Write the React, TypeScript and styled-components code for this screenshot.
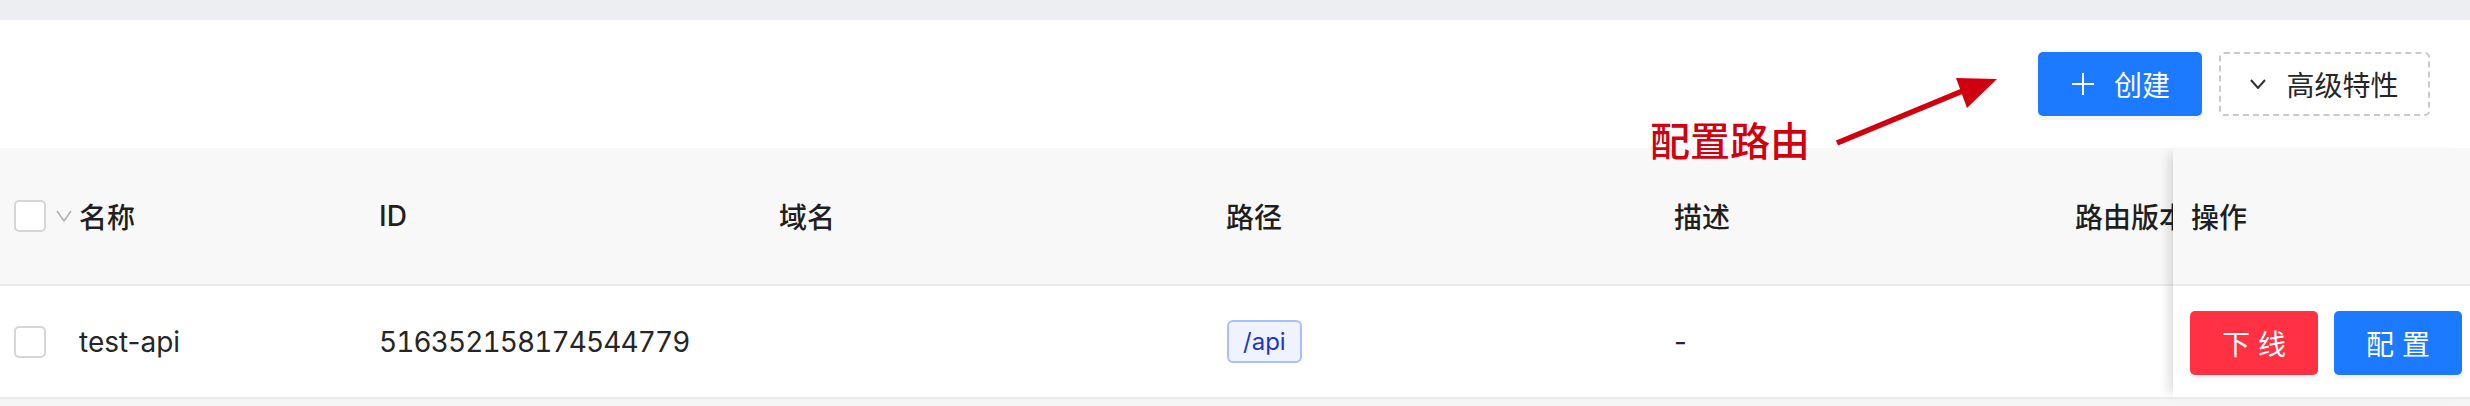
import React from 'react'
import styled, { createGlobalStyle } from 'styled-components'

const GlobalStyle = createGlobalStyle`
  html, body {
    margin: 0;
    padding: 0;
    overflow: hidden;
    background: #f5f5f5;
  }
  * { box-sizing: border-box; }
`

const FONT = `Inter, "Noto Sans CJK SC", "Noto Sans", sans-serif`

const Page = styled.div`
  position: relative;
  width: 2470px;
  height: 406px;
  background: #f5f5f5;
  font-family: ${FONT};
  color: #262626;
  overflow: hidden;
`

const TopBand = styled.div`
  height: 20px;
  background: #edeef2;
`

const Card = styled.div`
  background: #fff;
`

const Toolbar = styled.div`
  height: 128px;
  display: flex;
  justify-content: flex-end;
  align-items: flex-start;
  gap: 17px;
  padding: 32px 40px 0 0;
`

const PrimaryButton = styled.button`
  height: 64px;
  width: 164px;
  display: flex;
  align-items: center;
  justify-content: center;
  gap: 20px;
  padding: 0 0 0 2px;
  border: none;
  border-radius: 5px;
  background: #1b7aff;
  color: #fff;
  font-family: ${FONT};
  font-size: 28px;
  box-shadow: 0 4px 0 rgba(0, 0, 0, 0.04);
`

const DashedButton = styled.button`
  height: 64px;
  width: 211px;
  display: flex;
  align-items: center;
  justify-content: center;
  gap: 20px;
  padding: 0;
  border: 2px dashed #c9c9c9;
  border-radius: 5px;
  background: #fff;
  color: #262626;
  font-family: ${FONT};
  font-size: 28px;
  box-shadow: 0 4px 0 rgba(0, 0, 0, 0.02);
`

const Table = styled.div`
  display: flex;
`

const ScrollArea = styled.div`
  flex: 1;
  min-width: 0;
  overflow: hidden;
`

const Row = styled.div<{ $head?: boolean }>`
  display: grid;
  grid-template-columns: 63px 300px 400px 447px 448px 401px 300px;
  height: ${p => (p.$head ? 138 : 113)}px;
  background: ${p => (p.$head ? '#f8f8f8' : '#fff')};
  border-bottom: 2px solid #ebebeb;
`

const Cell = styled.div<{ $head?: boolean; $num?: boolean }>`
  display: flex;
  align-items: center;
  padding-left: 16px;
  font-size: 28px;
  font-weight: ${p => (p.$head ? 500 : 400)};
  color: ${p => (p.$head ? '#1f1f1f' : '#262626')};
  font-variant-numeric: ${p => (p.$num ? 'tabular-nums' : 'normal')};
  letter-spacing: ${p => (p.$num ? '-0.9px' : 'normal')};
  white-space: nowrap;
`

const SelectCell = styled.div`
  display: flex;
  align-items: center;
  gap: 10px;
  padding-left: 14px;
  overflow: visible;
`

const Checkbox = styled.span`
  flex: none;
  width: 32px;
  height: 32px;
  border: 2px solid #d6d6d6;
  border-radius: 5px;
  background: #fff;
`

const Tag = styled.span`
  display: inline-flex;
  align-items: center;
  height: 43px;
  padding: 0 14px;
  margin-left: 1px;
  border: 2px solid #a8bfff;
  border-radius: 6px;
  background: #eef3ff;
  color: #2236c0;
  font-size: 24px;
`

const FixedColumn = styled.div`
  flex: none;
  width: 297px;
  position: relative;
  z-index: 1;
  box-shadow: -10px 0 10px -6px rgba(0, 0, 0, 0.14);
`

const FixedHead = styled.div`
  height: 138px;
  display: flex;
  align-items: center;
  padding-left: 18px;
  background: #f8f8f8;
  border-bottom: 2px solid #ebebeb;
  font-size: 28px;
  font-weight: 500;
  color: #1f1f1f;
`

const FixedBody = styled.div`
  height: 113px;
  display: flex;
  align-items: center;
  gap: 16px;
  padding-left: 17px;
  background: #fff;
  border-bottom: 2px solid #ebebeb;
`

const ActionButton = styled.button<{ $danger?: boolean }>`
  width: 128px;
  height: 64px;
  margin-top: 2px;
  border: none;
  border-radius: 5px;
  background: ${p => (p.$danger ? '#ff3142' : '#1b7aff')};
  color: #fff;
  font-family: ${FONT};
  font-size: 28px;
  box-shadow: 0 4px 0 rgba(0, 0, 0, 0.04);
`

const Note = styled.div`
  position: absolute;
  left: 1650px;
  top: 122px;
  font-size: 40px;
  line-height: 40px;
  font-weight: 500;
  color: #d0000f;
  font-family: ${FONT};
`

const Arrow = styled.svg`
  position: absolute;
  left: 1830px;
  top: 70px;
`

const columns = ['名称', 'ID', '域名', '路径', '描述', '路由版本']

const Chevron: React.FC<{ color: string; w: number; h: number; sw: number }> = ({ color, w, h, sw }) => (
  <svg width={w} height={h} viewBox={`0 0 ${w} ${h}`} style={{ flex: 'none' }}>
    <polyline points={`1,1 ${w / 2},${h - 1} ${w - 1},1`} fill="none" stroke={color} strokeWidth={sw} />
  </svg>
)

const App: React.FC = () => {
  return (
    <Page>
      <GlobalStyle />
      <TopBand />
      <Card>
        <Toolbar>
          <PrimaryButton>
            <svg width="22" height="22" viewBox="0 0 22 22">
              <path d="M11 0v22M0 11h22" stroke="#fff" strokeWidth="2" />
            </svg>
            创建
          </PrimaryButton>
          <DashedButton>
            <Chevron color="#333" w={16} h={10} sw={2} />
            高级特性
          </DashedButton>
        </Toolbar>
        <Table>
          <ScrollArea>
            <Row $head>
              <SelectCell>
                <Checkbox />
                <Chevron color="#b3b3b3" w={16} h={12} sw={1.6} />
              </SelectCell>
              {columns.map(c => (
                <Cell $head key={c}>{c}</Cell>
              ))}
            </Row>
            <Row>
              <SelectCell>
                <Checkbox />
              </SelectCell>
              <Cell>test-api</Cell>
              <Cell $num>516352158174544779</Cell>
              <Cell />
              <Cell>
                <Tag>/api</Tag>
              </Cell>
              <Cell>-</Cell>
              <Cell />
            </Row>
          </ScrollArea>
          <FixedColumn>
            <FixedHead>操作</FixedHead>
            <FixedBody>
              <ActionButton $danger>下 线</ActionButton>
              <ActionButton>配 置</ActionButton>
            </FixedBody>
          </FixedColumn>
        </Table>
      </Card>
      <Note>配置路由</Note>
      <Arrow width="175" height="85" viewBox="0 0 175 85">
        <line x1="7" y1="73" x2="135" y2="20" stroke="#d0000f" strokeWidth="5.5" />
        <polygon points="126,8 167,9 137,38" fill="#d0000f" />
      </Arrow>
    </Page>
  )
}

export default App
